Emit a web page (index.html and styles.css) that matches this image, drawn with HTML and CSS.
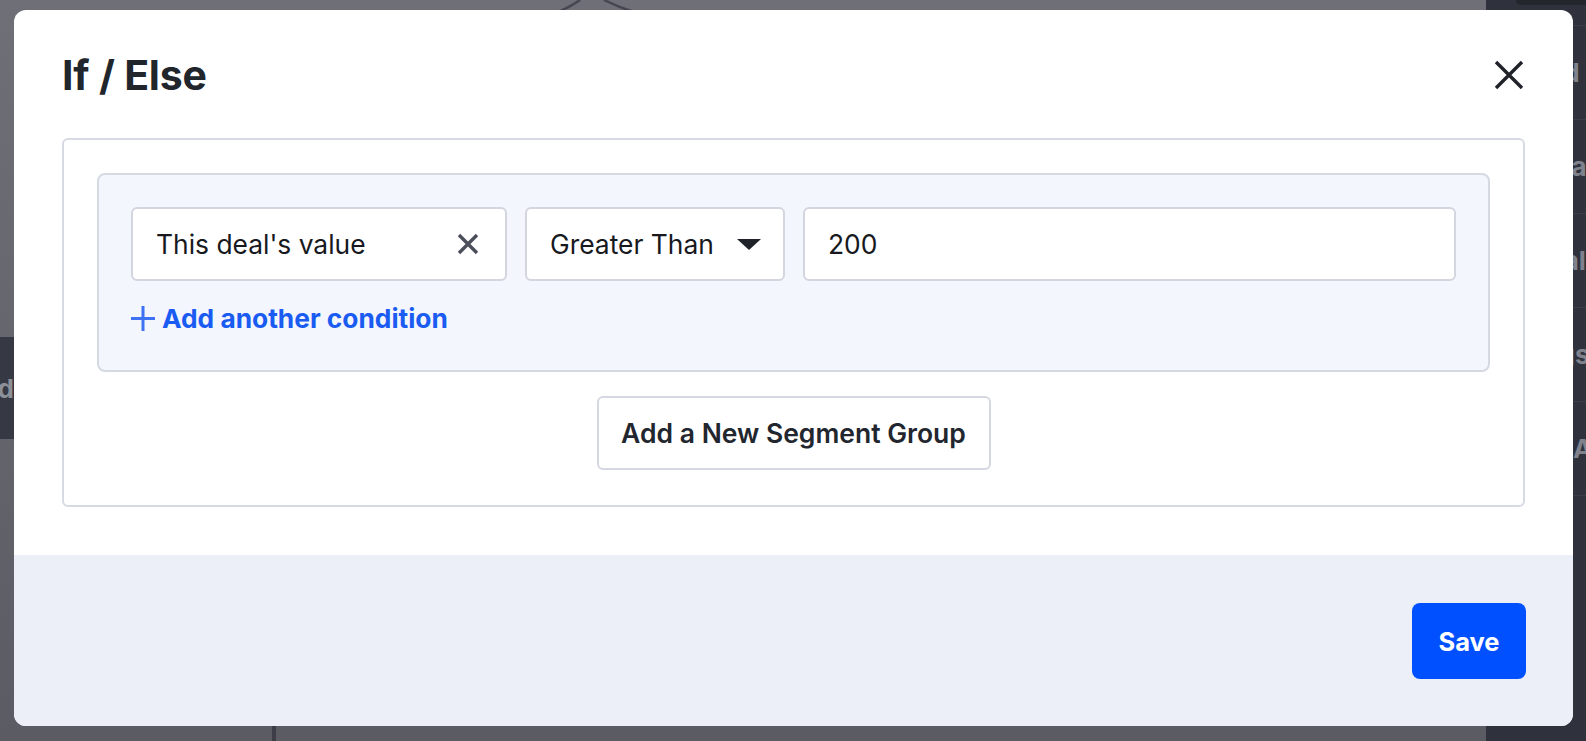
FILE: index.html
```html
<!DOCTYPE html>
<html lang="en">
<head>
<meta charset="utf-8">
<title>If / Else</title>
<link rel="stylesheet" href="styles.css">
</head>
<body>
<div class="app">
  <div class="canvas">
    <svg class="connector" width="120" height="14" viewBox="0 0 120 14">
      <path d="M40 0 Q30 7 16 13" fill="none" stroke="#45464f" stroke-width="2.5"/>
      <path d="M64 0 Q78 7 94 12" fill="none" stroke="#45464f" stroke-width="2.5"/>
    </svg>
    <div class="left-tab"><span>Add</span></div>
    <div class="bottom-line"></div>
    <div class="side-panel">
      <div class="side-top"><div class="side-pill"></div></div>
      <div class="side-row"><span>Add</span></div>
      <div class="side-row"><span>Data</span></div>
      <div class="side-row"><span>Goal</span></div>
      <div class="side-row"><span>Tags</span></div>
      <div class="side-row row-ap"><span>Ap</span></div>
    </div>
  </div>

  <div class="overlay">
    <div class="modal">
      <div class="modal-body">
        <div class="modal-header">
          <h1 class="modal-title">If / Else</h1>
          <button class="close-btn" aria-label="Close">
            <svg width="30" height="30" viewBox="0 0 30 30"><path d="M2 2 L28 28 M28 2 L2 28" stroke="#1f2329" stroke-width="3.4" fill="none"/></svg>
          </button>
        </div>
        <div class="segments">
          <div class="group">
            <div class="cond-row">
              <div class="field field-attr">
                <span class="field-text">This deal's value</span>
                <svg class="clear-icon" width="22" height="22" viewBox="0 0 22 22"><path d="M2 2 L20 20 M20 2 L2 20" stroke="#4b4f5a" stroke-width="3.4" fill="none"/></svg>
              </div>
              <div class="field field-op">
                <span class="field-text">Greater Than</span>
                <svg class="caret" width="24" height="11" viewBox="0 0 24 11"><path d="M0 0 H24 L12 11 Z" fill="#1f2329"/></svg>
              </div>
              <div class="field field-val">
                <span class="field-text">200</span>
              </div>
            </div>
            <div class="add-cond">
              <svg class="plus" width="24" height="25" viewBox="0 0 24 25"><path d="M12 0 V25 M0 12.5 H24" stroke="#3d72f3" stroke-width="3" fill="none"/></svg>
              <span>Add another condition</span>
            </div>
          </div>
          <div class="seg-actions">
            <button class="btn-secondary">Add a New Segment Group</button>
          </div>
        </div>
      </div>
      <div class="modal-footer">
        <button class="btn-primary">Save</button>
      </div>
    </div>
  </div>
</div>
</body>
</html>
```

FILE: styles.css
```css
* { box-sizing: border-box; }
html, body { margin: 0; padding: 0; }
body {
  width: 1586px;
  height: 741px;
  overflow: hidden;
  font-family: Inter, "Noto Sans", "Liberation Sans", sans-serif;
  color: #1f2329;
}
.app {
  position: relative;
  width: 1586px;
  height: 741px;
  background: linear-gradient(#6f6f78, #5b5b64);
}
.canvas { position: absolute; inset: 0; }
.connector { position: absolute; left: 540px; top: 0; }
.left-tab {
  position: absolute;
  left: 0; top: 337px;
  width: 30px; height: 102px;
  background: #363944;
  display: flex; align-items: center; justify-content: flex-end;
  overflow: hidden;
}
.left-tab span {
  font-weight: 700; font-size: 26px; color: #8d9099;
  margin-right: 16px;
}
.bottom-line {
  position: absolute;
  left: 272px; top: 700px;
  width: 4px; height: 41px;
  background: #3c3d47;
}
.side-panel {
  position: absolute;
  left: 1486px; top: 0;
  width: 100px; height: 741px;
  background: #2f323c;
  display: flex; flex-direction: column;
  overflow: hidden;
}
.side-top {
  height: 26px;
  border-bottom: 1px solid #3b3e49;
  display: flex;
  justify-content: flex-end;
}
.side-pill {
  width: 70px; height: 5px;
  background: #24262e;
  border-radius: 0 0 0 6px;
}
.side-row {
  height: 94px;
  border-bottom: 1px solid #3b3e49;
  display: flex; align-items: center;
  padding-left: 42px;
  white-space: nowrap;
}
.side-row span { font-weight: 700; font-size: 26px; color: #7f828c; }
.side-row.row-ap { padding-left: 87px; }

.overlay {
  position: absolute;
  inset: 0;
  padding: 10px 13px 15px 14px;
  display: flex;
}
.modal {
  flex: 1;
  background: #fff;
  border-radius: 12px;
  overflow: hidden;
  display: flex;
  flex-direction: column;
}
.modal-body { padding: 40px 48px 48px; }
.modal-header {
  height: 50px;
  display: flex;
  align-items: center;
  justify-content: space-between;
  margin-bottom: 38px;
}
.modal-title {
  margin: 0;
  font-size: 41px;
  font-weight: 700;
  color: #21252c;
  letter-spacing: -0.2px;
}
.close-btn {
  border: 0; background: none; padding: 0;
  width: 30px; height: 30px;
  display: flex;
  margin-right: 1px;
}
.segments {
  border: 2px solid #d7dae2;
  border-radius: 6px;
  padding: 33px 33px 35px;
}
.group {
  background: #f3f6fd;
  border: 2px solid #d5d9e2;
  border-radius: 8px;
  padding: 32px 32px 36px;
}
.cond-row {
  display: flex;
  gap: 18px;
}
.field {
  height: 74px;
  background: #fff;
  border: 2px solid #d3d6de;
  border-radius: 6px;
  display: flex;
  align-items: center;
  justify-content: space-between;
  padding: 0 23px;
}
.field-text { font-size: 26.4px; color: #17191e; }
.field-attr { width: 376px; padding-right: 26px; }
.field-op { width: 260px; padding-right: 22px; }
.field-val { flex: 1; }
.add-cond {
  margin-top: 21px;
  display: flex;
  align-items: center;
  gap: 7px;
  color: #1a5cf2;
  font-size: 26.3px;
  font-weight: 700;
  height: 32px;
}
.seg-actions {
  display: flex;
  justify-content: center;
  margin-top: 24px;
}
.btn-secondary {
  width: 394px; height: 74px;
  background: #fff;
  border: 2px solid #d5d8e0;
  border-radius: 6px;
  font-family: inherit;
  font-size: 26.5px;
  font-weight: 600;
  color: #22262e;
}
.modal-footer {
  flex: 1;
  background: #eceff8;
  padding: 48px 47px 48px;
  display: flex;
  justify-content: flex-end;
  align-items: flex-start;
}
.btn-primary {
  width: 114px; height: 76px;
  background: #0050ff;
  border: 0;
  border-radius: 8px;
  color: #fff;
  font-family: inherit;
  font-size: 25.5px;
  font-weight: 700;
}
```
